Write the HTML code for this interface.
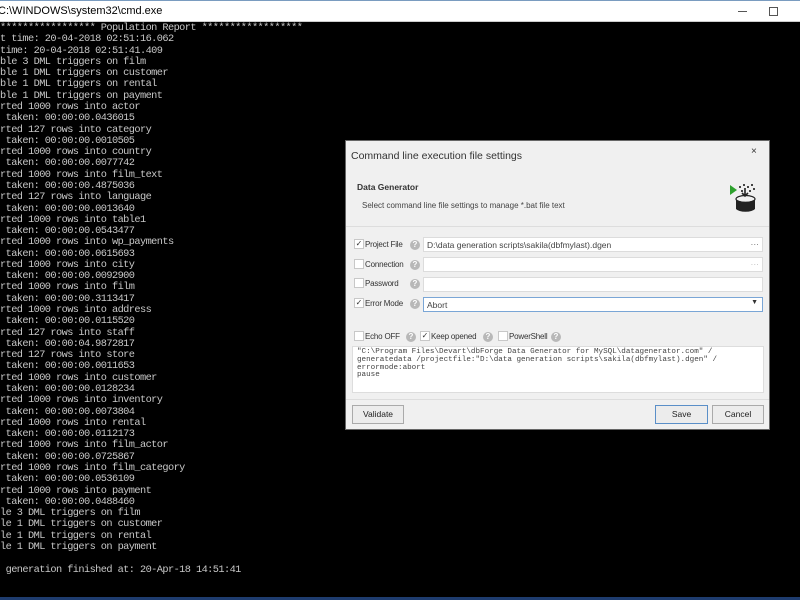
<!DOCTYPE html>
<html><head><meta charset="utf-8"><style>
*{margin:0;padding:0;box-sizing:border-box}
body{width:800px;height:600px;overflow:hidden;background:#000;position:relative;font-family:"Liberation Sans",sans-serif}
#tb{position:absolute;left:0;top:0;width:800px;height:22px;background:#fff;border-top:1px solid #7a9cc0;border-bottom:1px solid #ccc}
#tb .t{position:absolute;left:-2px;top:4px;font-size:11px;color:#000}
#con{position:absolute;left:0;top:23px;font-family:"Liberation Mono",monospace;font-size:10.3px;letter-spacing:-0.58px;line-height:11.28px;color:#c8c8c8;white-space:pre}
#bl{position:absolute;left:0;top:597px;width:800px;height:3px;background:#1e3c6e}
#dlg{position:absolute;left:345px;top:140px;width:425px;height:290px;background:#f0f0f0;border:1px solid #666;font-size:8.5px;color:#222}
.lbl{position:absolute;font-size:8px;letter-spacing:-0.2px;color:#333}
.cb{position:absolute;width:10px;height:10px;background:#fff;border:1px solid #c8c8c8;font-size:8px;line-height:8px;text-align:center;color:#333}
.q{position:absolute;width:10px;height:10px;border-radius:50%;background:#b8b8b8;color:#fff;font-size:8px;line-height:10px;text-align:center;font-weight:bold}
.in{position:absolute;left:77px;width:340px;height:15px;background:#fff;border:1px solid #dcdcdc;font-size:8.5px;padding:2px 3px;color:#444}
.btn{position:absolute;top:264px;height:19px;border:1px solid #aaa;background:#ececec;font-size:8.5px;text-align:center;line-height:17px;color:#222}
</style></head><body>
<div id="tb"><span class="t">C:\WINDOWS\system32\cmd.exe</span>
<div style="position:absolute;left:738px;top:10px;width:9px;height:1px;background:#555"></div>
<div style="position:absolute;left:769px;top:6px;width:9px;height:9px;border:1px solid #555"></div>
</div>
<div id="con">***************** Population Report ******************
t time: 20-04-2018 02:51:16.062
time: 20-04-2018 02:51:41.409
ble 3 DML triggers on film
ble 1 DML triggers on customer
ble 1 DML triggers on rental
ble 1 DML triggers on payment
rted 1000 rows into actor
 taken: 00:00:00.0436015
rted 127 rows into category
 taken: 00:00:00.0010505
rted 1000 rows into country
 taken: 00:00:00.0077742
rted 1000 rows into film_text
 taken: 00:00:00.4875036
rted 127 rows into language
 taken: 00:00:00.0013640
rted 1000 rows into table1
 taken: 00:00:00.0543477
rted 1000 rows into wp_payments
 taken: 00:00:00.0615693
rted 1000 rows into city
 taken: 00:00:00.0092900
rted 1000 rows into film
 taken: 00:00:00.3113417
rted 1000 rows into address
 taken: 00:00:00.0115520
rted 127 rows into staff
 taken: 00:00:04.9872817
rted 127 rows into store
 taken: 00:00:00.0011653
rted 1000 rows into customer
 taken: 00:00:00.0128234
rted 1000 rows into inventory
 taken: 00:00:00.0073804
rted 1000 rows into rental
 taken: 00:00:00.0112173
rted 1000 rows into film_actor
 taken: 00:00:00.0725867
rted 1000 rows into film_category
 taken: 00:00:00.0536109
rted 1000 rows into payment
 taken: 00:00:00.0488460
le 3 DML triggers on film
le 1 DML triggers on customer
le 1 DML triggers on rental
le 1 DML triggers on payment

 generation finished at: 20-Apr-18 14:51:41</div>
<div id="bl"></div>
<div id="dlg">
<div style="position:absolute;left:5px;top:9px;font-size:10.5px;color:#333">Command line execution file settings</div>
<div style="position:absolute;left:405px;top:5px;font-size:10px;color:#333">×</div>
<div style="position:absolute;left:11px;top:41px;font-size:8.5px;font-weight:bold;color:#333">Data Generator</div>
<div style="position:absolute;left:16px;top:60px;font-size:8px;color:#444">Select command line file settings to manage *.bat file text</div>
<svg style="position:absolute;left:381px;top:41px" width="32" height="35" viewBox="0 0 32 35">
<polygon points="3,3 3,13 10,8" fill="#2ea12e"/>
<g fill="#444"><rect x="12" y="4" width="2" height="2"/><rect x="16" y="2" width="2" height="2"/><rect x="20" y="4" width="2" height="2"/><rect x="24" y="2" width="2" height="2"/><rect x="26" y="6" width="2" height="2"/><rect x="14" y="8" width="2" height="2"/><rect x="22" y="8" width="2" height="2"/></g>
<path d="M18 6v8M15 11l3 3 3-3" stroke="#222" stroke-width="1.6" fill="none"/>
<path d="M9 17a10 4 0 0 0 19 0v10a10 4 0 0 1-19 0z" fill="#222"/>
<ellipse cx="18.5" cy="17" rx="9.5" ry="3.5" fill="none" stroke="#222" stroke-width="1.2"/>
</svg>
<div style="position:absolute;left:0;top:85px;width:423px;height:1px;background:#ddd"></div>
<div class="cb" style="left:8px;top:98px">✓</div><div class="lbl" style="left:19px;top:99px">Project File</div><div class="q" style="left:64px;top:99px">?</div>
<div class="in" style="top:96px">D:\data generation scripts\sakila(dbfmylast).dgen<span style="position:absolute;right:3px;top:1px;color:#666">···</span></div>
<div class="cb" style="left:8px;top:118px"></div><div class="lbl" style="left:19px;top:119px">Connection</div><div class="q" style="left:64px;top:119px">?</div>
<div class="in" style="top:116px"><span style="position:absolute;right:3px;top:1px;color:#bbb">···</span></div>
<div class="cb" style="left:8px;top:137px"></div><div class="lbl" style="left:19px;top:138px">Password</div><div class="q" style="left:64px;top:138px">?</div>
<div class="in" style="top:136px"></div>
<div class="cb" style="left:8px;top:157px">✓</div><div class="lbl" style="left:19px;top:158px">Error Mode</div><div class="q" style="left:64px;top:158px">?</div>
<div class="in" style="top:156px;border-color:#7aa6d6">Abort<span style="position:absolute;right:4px;top:1px;font-size:7px;color:#333">▼</span></div>
<div class="cb" style="left:8px;top:190px"></div><div class="lbl" style="left:19px;top:191px">Echo OFF</div><div class="q" style="left:60px;top:191px">?</div>
<div class="cb" style="left:74px;top:190px">✓</div><div class="lbl" style="left:85px;top:191px">Keep opened</div><div class="q" style="left:137px;top:191px">?</div>
<div class="cb" style="left:152px;top:190px"></div><div class="lbl" style="left:163px;top:191px">PowerShell</div><div class="q" style="left:205px;top:191px">?</div>
<div style="position:absolute;left:6px;top:205px;width:412px;height:47px;background:#fff;border:1px solid #ddd;font-family:'Liberation Mono',monospace;font-size:7.6px;line-height:7.8px;color:#444;padding:2px 4px;white-space:pre">"C:\Program Files\Devart\dbForge Data Generator for MySQL\datagenerator.com" /
generatedata /projectfile:"D:\data generation scripts\sakila(dbfmylast).dgen" /
errormode:abort
pause</div>
<div style="position:absolute;left:0;top:258px;width:423px;height:1px;background:#ddd"></div>
<div class="btn" style="left:6px;width:52px">Validate</div>
<div class="btn" style="left:309px;width:53px;border-color:#5a8fc8">Save</div>
<div class="btn" style="left:366px;width:52px">Cancel</div>
</div>
</body></html>
